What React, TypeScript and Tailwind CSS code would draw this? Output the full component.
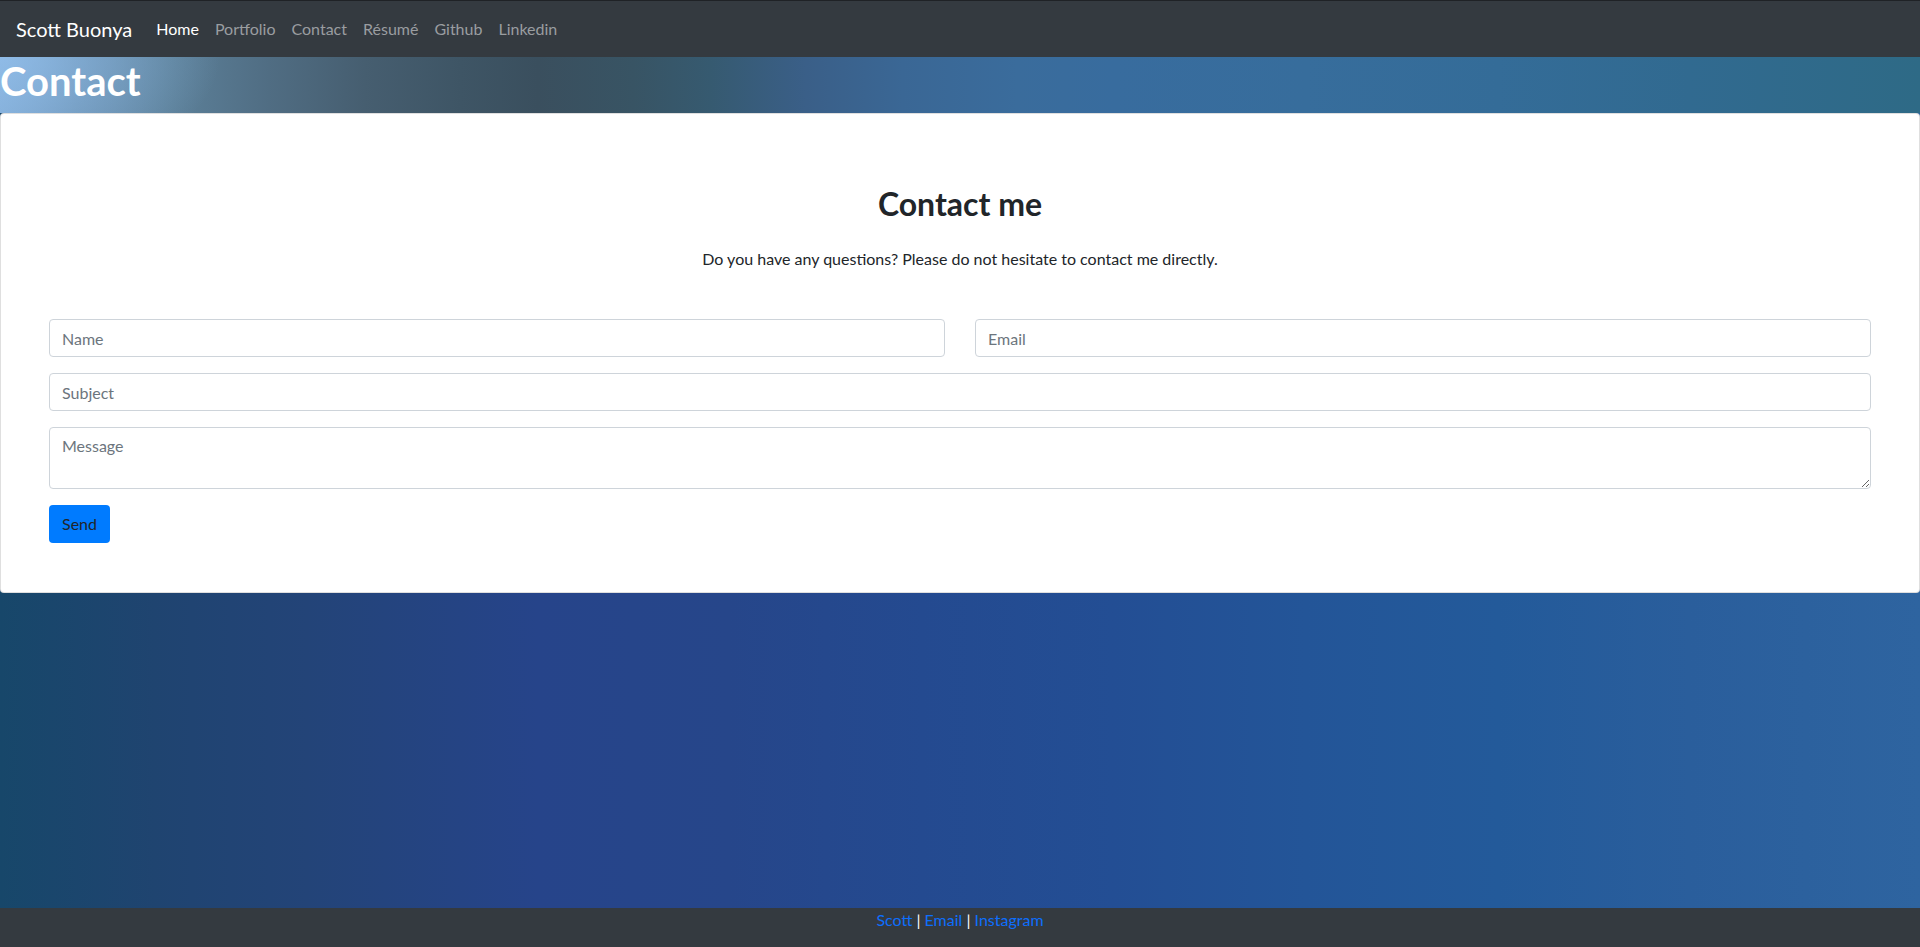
import React from "react";

const NAV_LINKS = ["Home", "Portfolio", "Contact", "Résumé", "Github", "Linkedin"];

function Navbar() {
  return (
    <nav className="h-[57px] border-t border-[#1f2226] bg-[#343a40] px-4 flex items-center">
      <span className="text-[20px] leading-[30px] text-white mr-4">Scott Buonya</span>
      <ul className="flex items-center">
        {NAV_LINKS.map((l, i) => (
          <li key={l}>
            <a
              href="#"
              className={
                i === 0
                  ? "px-2 py-2 text-base text-white"
                  : "px-2 py-2 text-base text-[#9a9da0] hover:text-white"
              }
            >
              {l}
            </a>
          </li>
        ))}
      </ul>
    </nav>
  );
}

function ContactForm() {
  const field =
    "w-full h-[38px] px-3 border border-[#ced4da] rounded text-base text-[#495057] placeholder:text-[#6c757d] bg-white outline-none";
  return (
    <div className="bg-white border border-[rgba(0,0,0,0.125)] rounded px-[48px] pt-[71px] pb-[49px]">
      <h2 className="text-[32px] leading-[38px] font-bold text-[#212529] text-center">Contact me</h2>
      <p className="mt-6 text-base leading-6 text-[#212529] text-center">
        Do you have any questions? Please do not hesitate to contact me directly.
      </p>
      <form className="mt-12" onSubmit={(e) => e.preventDefault()}>
        <div className="grid grid-cols-2 gap-x-[30px] mb-4">
          <input type="text" placeholder="Name" className={field} />
          <input type="email" placeholder="Email" className={field} />
        </div>
        <div className="mb-4">
          <input type="text" placeholder="Subject" className={field} />
        </div>
        <div className="mb-4">
          <textarea
            rows={2}
            placeholder="Message"
            className="block w-full h-[62px] px-3 py-[6px] leading-6 border border-[#ced4da] rounded text-base text-[#495057] placeholder:text-[#6c757d] outline-none"
          />
        </div>
        <button
          type="submit"
          className="h-[38px] w-[61px] rounded bg-[#007bff] text-base text-[#212529]"
        >
          Send
        </button>
      </form>
    </div>
  );
}

export default function App() {
  return (
    <div className="min-h-screen flex flex-col font-['Lato',sans-serif] bg-[linear-gradient(90deg,#17476a_0%,#1f4470_8%,#234478_16%,#26448a_28%,#26468a_38%,#244a90_48%,#234e94_58%,#235598_68%,#235a9a_78%,#2a5e9c_88%,#2e64a0_100%)]">
      <Navbar />
      <div className="bg-[radial-gradient(ellipse_220px_120px_at_0_0,rgba(150,195,240,0.7),rgba(150,195,240,0)),linear-gradient(90deg,#7fa9d2_0%,#6b92b4_4%,#5c8099_9%,#506d83_14%,#465e70_19%,#3e5565_24%,#3a4f5e_28%,#385464_33%,#365a70_37%,#3a5f88_42%,#3a6795_47%,#3a6c9c_53%,#386c9e_58%,#376d9c_68%,#346c98_78%,#316a90_88%,#2e6a86_100%)]">
        <h1 className="text-[40px] leading-[48px] font-bold text-white pb-2">Contact</h1>
      </div>
      <ContactForm />
      <div className="flex-1" />
      <footer className="h-[39px] bg-[#343a40] text-center text-base leading-6 text-white">
        <a href="#" className="text-[#0d6efd]">Scott</a> | <a href="#" className="text-[#0d6efd]">Email</a> |{" "}
        <a href="#" className="text-[#0d6efd]">Instagram</a>
      </footer>
    </div>
  );
}
